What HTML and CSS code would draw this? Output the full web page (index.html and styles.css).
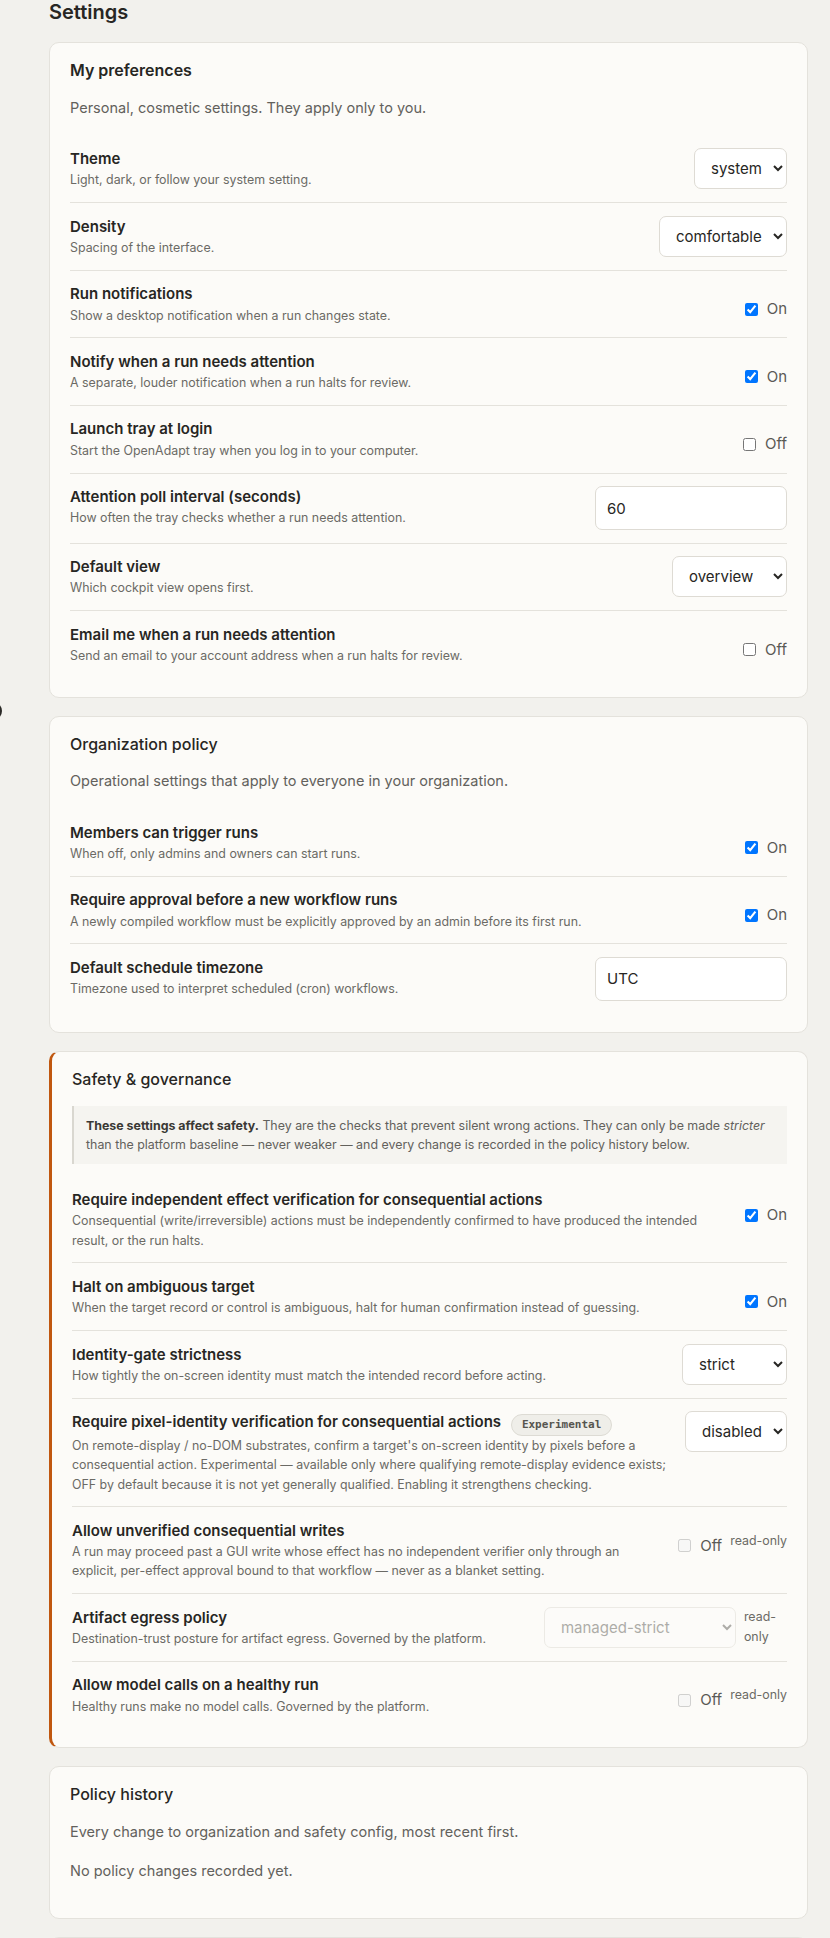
FILE: index.html
```html
<!DOCTYPE html>
<html lang="en">
<head>
    <meta charset="UTF-8">
    <meta name="viewport" content="width=device-width, initial-scale=1.0">
    <title>Settings</title>
    <link rel="stylesheet" href="styles.css">
</head>
<body>
    <span class="edge-handle"></span>

    <main class="settings">
        <h1 class="page-title">Settings</h1>

        <!-- Personal preferences -->
        <section class="card">
            <h2 class="card-title card-title--strong">My preferences</h2>
            <p class="card-intro">Personal, cosmetic settings. They apply only to you.</p>

            <div class="setting">
                <div class="setting-text">
                    <div class="setting-label">Theme</div>
                    <div class="setting-desc">Light, dark, or follow your system setting.</div>
                </div>
                <div class="setting-control">
                    <select class="select">
                        <option>system</option>
                        <option>light</option>
                        <option>dark</option>
                    </select>
                </div>
            </div>

            <div class="setting">
                <div class="setting-text">
                    <div class="setting-label">Density</div>
                    <div class="setting-desc">Spacing of the interface.</div>
                </div>
                <div class="setting-control">
                    <select class="select">
                        <option>comfortable</option>
                        <option>compact</option>
                    </select>
                </div>
            </div>

            <div class="setting">
                <div class="setting-text">
                    <div class="setting-label">Run notifications</div>
                    <div class="setting-desc">Show a desktop notification when a run changes state.</div>
                </div>
                <div class="setting-control">
                    <label class="toggle"><input type="checkbox" checked> On</label>
                </div>
            </div>

            <div class="setting">
                <div class="setting-text">
                    <div class="setting-label">Notify when a run needs attention</div>
                    <div class="setting-desc">A separate, louder notification when a run halts for review.</div>
                </div>
                <div class="setting-control">
                    <label class="toggle"><input type="checkbox" checked> On</label>
                </div>
            </div>

            <div class="setting">
                <div class="setting-text">
                    <div class="setting-label">Launch tray at login</div>
                    <div class="setting-desc">Start the OpenAdapt tray when you log in to your computer.</div>
                </div>
                <div class="setting-control">
                    <label class="toggle"><input type="checkbox"> Off</label>
                </div>
            </div>

            <div class="setting">
                <div class="setting-text">
                    <div class="setting-label">Attention poll interval (seconds)</div>
                    <div class="setting-desc">How often the tray checks whether a run needs attention.</div>
                </div>
                <div class="setting-control">
                    <input class="text-input" type="number" value="60">
                </div>
            </div>

            <div class="setting">
                <div class="setting-text">
                    <div class="setting-label">Default view</div>
                    <div class="setting-desc">Which cockpit view opens first.</div>
                </div>
                <div class="setting-control">
                    <select class="select">
                        <option>overview</option>
                        <option>runs</option>
                        <option>schedules</option>
                        <option>approvals</option>
                    </select>
                </div>
            </div>

            <div class="setting">
                <div class="setting-text">
                    <div class="setting-label">Email me when a run needs attention</div>
                    <div class="setting-desc">Send an email to your account address when a run halts for review.</div>
                </div>
                <div class="setting-control">
                    <label class="toggle"><input type="checkbox"> Off</label>
                </div>
            </div>
        </section>

        <!-- Organization -->
        <section class="card">
            <h2 class="card-title">Organization policy</h2>
            <p class="card-intro">Operational settings that apply to everyone in your organization.</p>

            <div class="setting">
                <div class="setting-text">
                    <div class="setting-label">Members can trigger runs</div>
                    <div class="setting-desc">When off, only admins and owners can start runs.</div>
                </div>
                <div class="setting-control">
                    <label class="toggle"><input type="checkbox" checked> On</label>
                </div>
            </div>

            <div class="setting">
                <div class="setting-text">
                    <div class="setting-label">Require approval before a new workflow runs</div>
                    <div class="setting-desc">A newly compiled workflow must be explicitly approved by an admin before its first run.</div>
                </div>
                <div class="setting-control">
                    <label class="toggle"><input type="checkbox" checked> On</label>
                </div>
            </div>

            <div class="setting">
                <div class="setting-text">
                    <div class="setting-label">Default schedule timezone</div>
                    <div class="setting-desc">Timezone used to interpret scheduled (cron) workflows.</div>
                </div>
                <div class="setting-control">
                    <input class="text-input" type="text" value="UTC">
                </div>
            </div>
        </section>

        <!-- Safety -->
        <section class="card card--safety">
            <h2 class="card-title">Safety &amp; governance</h2>
            <div class="callout">
                <strong>These settings affect safety.</strong> They are the checks that prevent silent wrong actions. They can only be made <em>stricter</em> than the platform baseline — never weaker — and every change is recorded in the policy history below.
            </div>

            <div class="setting">
                <div class="setting-text">
                    <div class="setting-label">Require independent effect verification for consequential actions</div>
                    <div class="setting-desc">Consequential (write/irreversible) actions must be independently confirmed to have produced the intended result, or the run halts.</div>
                </div>
                <div class="setting-control">
                    <label class="toggle"><input type="checkbox" checked> On</label>
                </div>
            </div>

            <div class="setting">
                <div class="setting-text">
                    <div class="setting-label">Halt on ambiguous target</div>
                    <div class="setting-desc">When the target record or control is ambiguous, halt for human confirmation instead of guessing.</div>
                </div>
                <div class="setting-control">
                    <label class="toggle"><input type="checkbox" checked> On</label>
                </div>
            </div>

            <div class="setting">
                <div class="setting-text">
                    <div class="setting-label">Identity-gate strictness</div>
                    <div class="setting-desc">How tightly the on-screen identity must match the intended record before acting.</div>
                </div>
                <div class="setting-control">
                    <select class="select">
                        <option>strict</option>
                        <option>standard</option>
                    </select>
                </div>
            </div>

            <div class="setting">
                <div class="setting-text">
                    <div class="setting-label">Require pixel-identity verification for consequential actions <span class="badge">Experimental</span></div>
                    <div class="setting-desc">On remote-display / no-DOM substrates, confirm a target's on-screen identity by pixels before a consequential action. Experimental — available only where qualifying remote-display evidence exists; OFF by default because it is not yet generally qualified. Enabling it strengthens checking.</div>
                </div>
                <div class="setting-control">
                    <select class="select">
                        <option>disabled</option>
                        <option>enabled</option>
                    </select>
                </div>
            </div>

            <div class="setting">
                <div class="setting-text">
                    <div class="setting-label">Allow unverified consequential writes</div>
                    <div class="setting-desc">A run may proceed past a GUI write whose effect has no independent verifier only through an explicit, per-effect approval bound to that workflow — never as a blanket setting.</div>
                </div>
                <div class="setting-control">
                    <label class="toggle"><input type="checkbox" disabled> Off</label>
                    <span class="readonly">read-only</span>
                </div>
            </div>

            <div class="setting">
                <div class="setting-text">
                    <div class="setting-label">Artifact egress policy</div>
                    <div class="setting-desc">Destination-trust posture for artifact egress. Governed by the platform.</div>
                </div>
                <div class="setting-control">
                    <select class="select select--egress" disabled>
                        <option>managed-strict</option>
                        <option>managed-permissive</option>
                    </select>
                    <span class="readonly">read-only</span>
                </div>
            </div>

            <div class="setting">
                <div class="setting-text">
                    <div class="setting-label">Allow model calls on a healthy run</div>
                    <div class="setting-desc">Healthy runs make no model calls. Governed by the platform.</div>
                </div>
                <div class="setting-control">
                    <label class="toggle"><input type="checkbox" disabled> Off</label>
                    <span class="readonly">read-only</span>
                </div>
            </div>
        </section>

        <!-- History -->
        <section class="card">
            <h2 class="card-title">Policy history</h2>
            <p class="card-intro">Every change to organization and safety config, most recent first.</p>
            <p class="card-intro">No policy changes recorded yet.</p>
        </section>

        <section class="card">
            <h2 class="card-title">Members</h2>
            <p class="card-intro">People who can access this organization.</p>
        </section>
    </main>
</body>
</html>
```

FILE: styles.css
```css
* {
    box-sizing: border-box;
}
body {
    margin: 0;
    background-color: #f2f1ed;
    font-family: Inter, "Noto Sans", sans-serif;
    color: #272623;
}
.edge-handle {
    position: absolute;
    left: -16px;
    top: 702px;
    width: 18px;
    height: 18px;
    border: 2px solid #2b2a27;
    border-radius: 50%;
}
.settings {
    display: flex;
    flex-direction: column;
    gap: 18px;
    padding: 0 22px 40px 49px;
}
.page-title {
    margin: 0;
    font-size: 20px;
    line-height: 24px;
    font-weight: 600;
}
.card {
    background-color: #fcfbf8;
    border: 1px solid #e4e2dc;
    border-radius: 10px;
    padding: 15px 20px 19px;
}
.card--safety {
    border-left: 3px solid #c0570f;
}
.card-title {
    margin: 0 0 13px;
    font-size: 16px;
    line-height: 25.6px;
    font-weight: 500;
}
.card-title--strong {
    font-weight: 600;
}
.card-intro {
    margin: 0 0 16.5px;
    font-size: 14.5px;
    line-height: 22.4px;
    color: #62615c;
}
.callout {
    margin-bottom: 12.5px;
    padding: 10px 12px;
    border-left: 2px solid #d9d7d0;
    background-color: #f5f4f0;
    font-size: 12.4px;
    line-height: 19px;
    color: #62615c;
}
.callout strong {
    color: #3a3935;
}

/* one setting row: text on the left, control on the right */
.setting {
    display: flex;
    align-items: flex-start;
    gap: 18px;
    padding: 12.5px 0;
}
.setting + .setting {
    border-top: 1px solid #e4e2dc;
}
.setting-text {
    flex: 1;
    min-width: 0;
}
.setting-label {
    font-size: 15px;
    line-height: 22.4px;
    font-weight: 600;
}
.setting-desc {
    font-size: 12.4px;
    line-height: 19.2px;
    color: #6b6a65;
}
.setting-control {
    flex-shrink: 0;
    max-width: 34%;
    display: flex;
    align-items: flex-start;
    gap: 8px;
}
.select {
    height: 41px;
    padding: 0 8px 0 12px;
    font-family: Inter, "Noto Sans", sans-serif;
    font-size: 15px;
    color: #272623;
    background-color: #fff;
    border: 1px solid #dedbd4;
    border-radius: 7px;
}
.select--egress {
    width: 193px;
}
.select:disabled {
    color: #8d8c87;
    background-color: #fdfcfa;
    border-color: #e6e4de;
}
.text-input {
    width: 192px;
    height: 44px;
    padding: 0 11px;
    font-family: Inter, "Noto Sans", sans-serif;
    font-size: 15px;
    color: #272623;
    background-color: #fff;
    border: 1px solid #dedbd4;
    border-radius: 7px;
}
.toggle {
    display: flex;
    align-items: center;
    gap: 9px;
    margin-top: 16px;
    font-size: 15px;
    line-height: 20px;
    color: #5a5955;
}
.toggle input {
    margin: 0 0 0 4px;
    width: 13px;
    height: 13px;
}
.readonly {
    font-size: 12.4px;
    line-height: 20px;
    color: #6b6a65;
}
.toggle + .readonly {
    margin-top: 11px;
}
.badge {
    display: inline-block;
    margin-left: 6px;
    padding: 0 10px;
    font-family: "DejaVu Sans Mono", monospace;
    font-size: 11px;
    font-weight: 600;
    line-height: 20px;
    color: #56554f;
    background-color: #efeee9;
    border: 1px solid #dddbd4;
    border-radius: 999px;
    vertical-align: -1px;
}
```
